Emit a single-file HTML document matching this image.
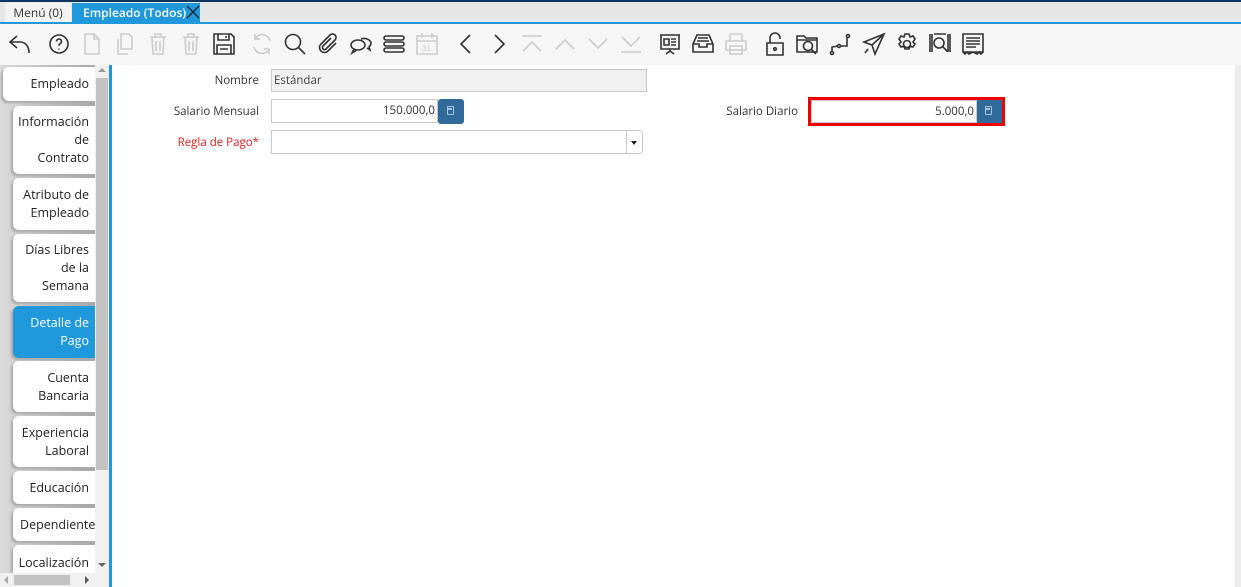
<!DOCTYPE html>
<html><head><meta charset="utf-8"><style>
*{margin:0;padding:0;box-sizing:border-box}
body{width:1241px;height:587px;overflow:hidden;background:#f6f6f6;font-family:"Open Sans","Liberation Sans",sans-serif;font-size:12px;color:#333;position:relative}
.a{position:absolute}
.tab{position:absolute;left:13px;width:82px;background:#fff;border-radius:6px 0 0 6px;box-shadow:-2px 2px 2px #aaa;text-align:right;padding-right:6px;font-size:12.5px;line-height:18px;color:#222;display:flex;flex-direction:column;justify-content:center;align-items:flex-end}
.lbl{position:absolute;text-align:right;font-size:11.5px;color:#333}
.in{position:absolute;border:1px solid #c8c8c8;background:#fff;font-size:11.5px;line-height:22px;padding:0 2px}
.btn{position:absolute;background:#2f6a9a;border-radius:3px}
.btn i{position:absolute;left:9px;top:7px;width:7px;height:9px;border:1.5px solid #a9c4dc;border-radius:1px}
.btn i:after{content:"";position:absolute;left:0;top:1px;width:4px;height:1.5px;background:#a9c4dc}
svg.ic{position:absolute;top:32px;width:24px;height:24px;fill:none;stroke:#333;stroke-width:1.6}
svg.d{stroke:#ccc}
</style></head><body>
<div class="a" style="left:0;top:0;width:1241px;height:2px;background:#0d3760"></div>
<div class="a" style="left:0;top:2px;width:1241px;height:20px;background:#e6e6e6"></div>
<div class="a" style="left:5px;top:3px;width:66px;height:19px;background:#f3f3f3;font-size:12px;line-height:19px;text-align:center">Menú (0)</div>
<div class="a" style="left:72px;top:3px;width:128px;height:19px;background:#1f98dc;color:#fff;font-size:12px;font-weight:600;line-height:19px;padding-left:11px;white-space:nowrap">Empleado (Todos)</div>
<svg class="a" style="left:186px;top:5px" width="14" height="14" viewBox="0 0 14 14"><path d="M1 1L13 13M13 1L1 13" stroke="#222" stroke-width="1.3"/></svg>
<div class="a" style="left:0;top:22px;width:1241px;height:1.5px;background:#1f98dc"></div>

<svg class="ic" style="left:8px" viewBox="0 0 24 24"><path d="M9 4L2 10l7 6M2 10h10c6 0 9 5 9 11"/></svg>
<svg class="ic" style="left:47px" viewBox="0 0 24 24"><circle cx="12" cy="12" r="9"/><path d="M9.5 9.5a2.5 2.5 0 1 1 3.5 2.3c-.8.4-1 1-1 2M12 16.5v1"/></svg>
<svg class="ic d" style="left:80px" viewBox="0 0 24 24"><path d="M5 2h9l5 5v15H5zM14 2v5h5"/></svg>
<svg class="ic d" style="left:113px" viewBox="0 0 24 24"><path d="M8 2h8l3 3v12H8zM5 7v15h10"/></svg>
<svg class="ic d" style="left:146px" viewBox="0 0 24 24"><path d="M4 5h16M9 5V2h6v3M6 5l1 17h10l1-17M10 9v10M14 9v10"/></svg>
<svg class="ic d" style="left:179px" viewBox="0 0 24 24"><path d="M4 5h16M9 5V2h6v3M6 5l1 17h10l1-17M10 9v10M14 9v10"/></svg>
<svg class="ic" style="left:212px" viewBox="0 0 24 24"><path d="M2 2h17l3 3v17H2zM6 2v6h11V2M14 4v2M5 13h14v9H5zM8 17h8"/></svg>
<svg class="ic d" style="left:250px" viewBox="0 0 24 24"><path d="M20 9A8 8 0 0 0 5 7M4 15a8 8 0 0 0 15 2M5 2v5h5M19 22v-5h-5"/></svg>
<svg class="ic" style="left:283px" viewBox="0 0 24 24"><circle cx="10" cy="10" r="7.5"/><path d="M15.5 15.5L22 22"/></svg>
<svg class="ic" style="left:316px" viewBox="0 0 24 24"><path d="M20 11l-8.5 8.5a5 5 0 0 1-7-7L14 3a3.5 3.5 0 0 1 5 5l-9 9a2 2 0 0 1-3-3l8-8"/></svg>
<svg class="ic" style="left:349px" viewBox="0 0 24 24"><ellipse cx="9" cy="13" rx="7" ry="5"/><path d="M5 17l-2 4 5-3M12 7a7 5 0 0 1 10 4c0 2-1 3-2 4l1 3-3-2"/></svg>
<svg class="ic" style="left:382px" viewBox="0 0 24 24"><rect x="2" y="4" width="20" height="4" rx="2"/><rect x="2" y="10" width="20" height="4" rx="2"/><rect x="2" y="16" width="20" height="4" rx="2"/></svg>
<svg class="ic d" style="left:415px" viewBox="0 0 24 24"><path d="M2 4h20v18H2zM2 9h20M7 1v5M17 1v5"/><text x="7" y="19" font-size="8" fill="#ccc" stroke="none" font-family="Liberation Sans">31</text></svg>
<svg class="ic" style="left:454px" viewBox="0 0 24 24"><path d="M16 3L7 12l9 9"/></svg>
<svg class="ic" style="left:487px" viewBox="0 0 24 24"><path d="M8 3l9 9-9 9"/></svg>
<svg class="ic d" style="left:520px" viewBox="0 0 24 24"><path d="M2 4h20M3 19l9-9 9 9"/></svg>
<svg class="ic d" style="left:553px" viewBox="0 0 24 24"><path d="M3 17l9-9 9 9"/></svg>
<svg class="ic d" style="left:586px" viewBox="0 0 24 24"><path d="M3 7l9 9 9-9"/></svg>
<svg class="ic d" style="left:619px" viewBox="0 0 24 24"><path d="M2 20h20M3 5l9 9 9-9"/></svg>
<svg class="ic" style="left:658px" viewBox="0 0 24 24"><path d="M2 3h20M3 3v14h18V3M6 7h5v6H6zM13 7h5M13 10h5M13 13h5M12 17v3M8 22l4-3 4 3"/></svg>
<svg class="ic" style="left:691px" viewBox="0 0 24 24"><path d="M2 12l4-9h12l4 9v8H2zM2 12h6v3h8v-3h6M7 6h10M6 9h12"/></svg>
<svg class="ic d" style="left:724px" viewBox="0 0 24 24"><path d="M6 9V2h12v7M2 9h20v9H2zM6 14h12v8H6z"/></svg>
<svg class="ic" style="left:763px" viewBox="0 0 24 24"><path d="M7 11V6a5 5 0 0 1 10 0v1M4 11h16v12H4z"/><circle cx="12" cy="17" r="1.3"/></svg>
<svg class="ic" style="left:796px" viewBox="0 0 24 24"><path d="M1 4h7l2 2h11v14H1zM1 8h20"/><circle cx="12" cy="14" r="4.5"/><path d="M15 17l5 5"/></svg>
<svg class="ic" style="left:829px" viewBox="0 0 24 24"><circle cx="3" cy="21" r="1.5"/><circle cx="10" cy="14" r="1.5"/><circle cx="19" cy="4" r="1.5"/><path d="M3 19v-4l6-1M11 14h7V6"/></svg>
<svg class="ic" style="left:862px" viewBox="0 0 24 24"><path d="M22 2L2 10l8 3 3 9zM22 2L10 13M6 17l-3 4"/></svg>
<svg class="ic" style="left:895px" viewBox="0 0 24 24"><circle cx="12" cy="12" r="3.5"/><path d="M10 2h4l1 3 3-1 2 3-2 3 2 2-2 3-3-1-1 3h-4l-1-3-3 1-2-3 2-2-2-3 2-3 3 1z"/></svg>
<svg class="ic" style="left:928px" viewBox="0 0 24 24"><path d="M2 2v18M4 2v18M20 2v18M22 2v18M6 2h12"/><circle cx="11" cy="11" r="5"/><path d="M14.5 14.5l5 5"/></svg>
<svg class="ic" style="left:961px" viewBox="0 0 24 24"><path d="M2 2h20v18H2zM5 6h14M5 9h14M5 12h14M5 15h10M2 20l2 2 2-2 2 2 4-2 4 2 2-2 2 2 2-2"/></svg>

<div class="a" style="left:0;top:65px;width:95px;height:508px;background:linear-gradient(90deg,#dcdcdc,#cfcfcf 20%,#a8a8a8)"></div>
<div class="tab" style="left:3px;width:92px;top:67px;height:34px">Empleado</div>
<div class="tab" style="top:106px;height:68px"><span>Información</span><span>de</span><span>Contrato</span></div>
<div class="tab" style="top:178px;height:52px"><span>Atributo de</span><span>Empleado</span></div>
<div class="tab" style="top:234px;height:68px"><span>Días Libres</span><span>de la</span><span>Semana</span></div>
<div class="tab" style="top:306px;height:52px;background:#1f98dc;color:#fff"><span>Detalle de</span><span>Pago</span></div>
<div class="tab" style="top:361px;height:51px"><span>Cuenta</span><span>Bancaria</span></div>
<div class="tab" style="top:416px;height:51px"><span>Experiencia</span><span>Laboral</span></div>
<div class="tab" style="top:471px;height:33px"><span>Educación</span></div>
<div class="tab" style="top:508px;height:33px;overflow:hidden;white-space:nowrap;align-items:flex-start;padding-left:7px">Dependientes</div>
<div class="tab" style="top:545px;height:35px"><span>Localización</span></div>
<div class="a" style="left:95px;top:65px;width:14px;height:508px;background:#f0f0f0"></div>
<div class="a" style="left:96px;top:78px;width:12px;height:392px;background:#c2c2c2"></div>
<div class="a" style="left:98px;top:68px;width:0;height:0;border:4px solid transparent;border-bottom-color:#999;border-top:0"></div>
<div class="a" style="left:98px;top:563px;width:0;height:0;border:4px solid transparent;border-top-color:#666;border-bottom:0"></div>
<div class="a" style="left:0;top:573px;width:109px;height:14px;background:#f0f0f0"></div>
<div class="a" style="left:14px;top:575px;width:56px;height:10px;background:#c2c2c2"></div>
<div class="a" style="left:4px;top:576px;border:4px solid transparent;border-right-color:#aaa;border-left:0"></div>
<div class="a" style="left:85px;top:576px;border:4px solid transparent;border-left-color:#555;border-right:0"></div>
<div class="a" style="left:109px;top:65px;width:3px;height:522px;background:#1f98dc"></div>
<div class="a" style="left:112px;top:65px;width:1123px;height:522px;background:#fff"></div>
<div class="a" style="left:1235px;top:65px;width:6px;height:522px;background:#ececec"></div>

<div class="lbl" style="left:140px;width:119px;top:73px">Nombre</div>
<div class="in" style="left:271px;top:69px;width:376px;height:23px;background:#f0f0f0;line-height:21px;color:#444">Estándar</div>
<div class="lbl" style="left:140px;width:119px;top:104px">Salario Mensual</div>
<div class="in" style="left:271px;top:99px;width:167px;height:24px;text-align:right">150.000,0</div>
<div class="btn" style="left:438px;top:99px;width:26px;height:25px"><i></i></div>
<div class="lbl" style="left:140px;width:119px;top:135px;color:#e02020">Regla de Pago<span style="color:#e02020">*</span></div>
<div class="in" style="left:271px;top:130px;width:372px;height:24px;border-radius:0 3px 3px 0"></div>
<div class="a" style="left:626px;top:131px;width:1px;height:22px;background:#ccc"></div>
<div class="a" style="left:631px;top:141px;border:3.5px solid transparent;border-top:4px solid #222;border-bottom:0"></div>
<div class="lbl" style="left:680px;width:118px;top:104px">Salario Diario</div>
<div class="a" style="left:808px;top:97px;width:197px;height:29px;border:3px solid #ee0000"></div>
<div class="in" style="left:811px;top:100px;width:166px;height:23px;text-align:right;line-height:21px">5.000,0</div>
<div class="btn" style="left:977px;top:100px;width:25px;height:23px;border-radius:0"><i style="top:6px;left:8px"></i></div>
</body></html>
